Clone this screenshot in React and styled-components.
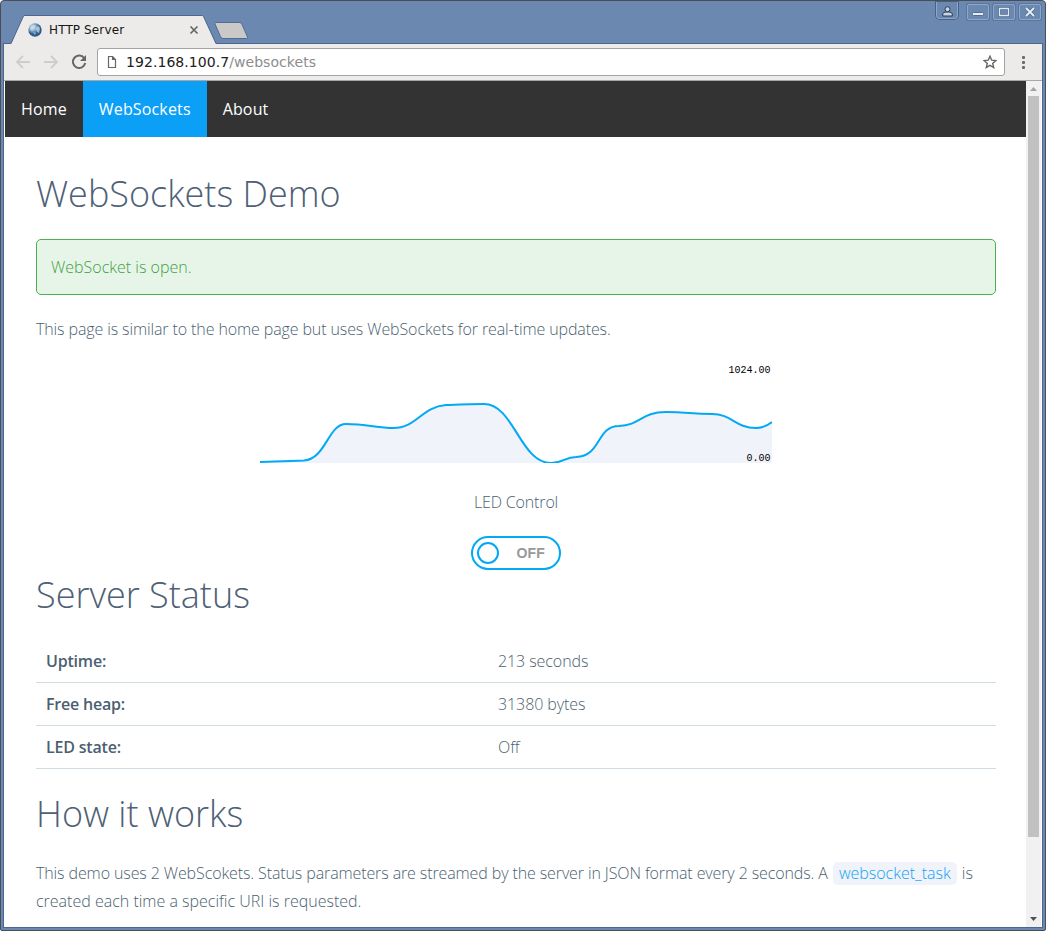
import React from "react";
import styled, { createGlobalStyle } from "styled-components";

const Global = createGlobalStyle`
  *, *::before, *::after { box-sizing: border-box; }
  html, body { margin: 0; padding: 0; background: #fff; }
  body { overflow: hidden; }
`;

const Window = styled.div`
  position: relative;
  display: flex;
  flex-direction: column;
  width: 1046px;
  height: 931px;
  overflow: hidden;
  padding: 1px 1px 1px 1px;
  background: #6b89b0;
  border: 1px solid #4b4e55;
  border-radius: 4px 4px 2px 2px;
`;

const TitleBar = styled.header`
  position: relative;
  display: flex;
  justify-content: space-between;
  flex: none;
  height: 41px;
`;

const TabStrip = styled.div`
  position: relative;
  width: 260px;
  height: 41px;
`;

const TabShape = styled.svg`
  position: absolute;
  left: 0;
  top: 0;
`;

const TabContent = styled.div`
  position: relative;
  display: flex;
  align-items: center;
  height: 27px;
  margin: 14px 0 0 26px;
  width: 171px;
`;

const TabTitle = styled.span`
  flex: 1;
  margin-left: 7px;
  font: 12px/20px "DejaVu Sans", sans-serif;
  letter-spacing: 0.12px;
  color: #161616;
`;

const WindowButtons = styled.div`
  display: flex;
  align-items: flex-start;
  margin-right: 3px;
`;

const WindowButton = styled.button`
  display: flex;
  align-items: center;
  justify-content: center;
  width: 22px;
  height: 16px;
  margin: 2px 0 0 4px;
  padding: 0;
  background: #6b89b0;
  border: 1px solid #8fa6c6;
  border-radius: 2px;
  box-shadow: 0 0 0 1px #58779e;
`;

const ProfileButton = styled(WindowButton)`
  height: 17px;
  margin: 0 5px 0 0;
  padding-top: 2px;
  border-top: 0;
  border-radius: 0 0 4px 4px;
  box-shadow: 0 0 0 1px #46618a;
`;

const Frame = styled.div`
  display: flex;
  flex-direction: column;
  flex: 1;
  min-height: 0;
  margin: 0 1px 1px 1px;
  border: 1px solid #4a678d;
`;

const Toolbar = styled.div`
  display: flex;
  align-items: center;
  flex: none;
  height: 37px;
  padding: 0 17px 0 11px;
  background: #edebe9;
  border-bottom: 1px solid #aaa8a6;
`;

const Tool = styled.span`
  display: flex;
  width: 16px;
  height: 16px;
  margin-right: 12px;
`;

const AddressBar = styled.div`
  display: flex;
  align-items: center;
  flex: 1;
  height: 28px;
  margin-left: -2px;
  padding: 0 7px 0 9px;
  background: #fff;
  border: 1px solid #a3a3a3;
  border-radius: 3px;
`;

const Url = styled.span`
  flex: 1;
  margin-left: 9px;
  font: 14px/20px "DejaVu Sans", sans-serif;
  letter-spacing: 0.06px;
  color: #8c8c8c;
`;

const Host = styled.span`
  color: #202020;
`;

const MenuDots = styled.div`
  display: flex;
  flex-direction: column;
  gap: 2px;
  margin-left: 17px;
`;

const Dot = styled.i`
  width: 3px;
  height: 3px;
  border-radius: 1px;
  background: #6b6b6b;
`;

const Viewport = styled.div`
  display: flex;
  flex: 1;
  min-height: 0;
  background: #fff;
  border-left: 1px solid #fff;
`;

const Page = styled.main`
  width: 1021px;
  height: 100%;
  overflow: hidden;
  font: 300 16px/28px "Open Sans", sans-serif;
  color: #4c5f71;
`;

const ScrollTrack = styled.div`
  display: flex;
  flex-direction: column;
  align-items: center;
  justify-content: space-between;
  width: 15px;
  background: #f1f1f1;
`;

const ScrollThumb = styled.div`
  width: 11px;
  height: 741px;
  margin-bottom: auto;
  background: #c1c1c1;
`;

const ScrollArrow = styled.svg`
  flex: none;
  display: block;
`;

const Nav = styled.nav`
  display: flex;
  height: 56px;
  background: #333;
`;

const NavLink = styled.a`
  padding: 0 16px;
  font-weight: 400;
  line-height: 56px;
  letter-spacing: 0.15px;
  color: #fff;
  background: ${(p) => (p.$active ? "#0c9ff6" : "transparent")};
`;

const Content = styled.div`
  width: 960px;
  margin-left: 31px;
  padding-top: 27px;
`;

const Heading = styled.h1`
  height: 60px;
  margin: ${(p) => p.$margin || "0"};
  font-size: 36px;
  font-weight: 300;
  line-height: 60px;
  letter-spacing: 0;
  color: #4e6076;
`;

const Alert = styled.div`
  height: 56px;
  margin-top: 15px;
  padding: 13px 14px;
  color: #3f9f45;
  background: #e7f5e8;
  border: 1px solid #4caf50;
  border-radius: 5px;
`;

const Paragraph = styled.p`
  margin: ${(p) => p.$margin || "0"};
`;

const Sentence = styled.span`
  letter-spacing: -0.11px;
`;

const Chart = styled.svg`
  display: block;
  margin: 20px auto 0;
`;

const LedControl = styled.div`
  display: flex;
  flex-direction: column;
  align-items: center;
  margin-top: 25px;
  letter-spacing: -0.15px;
`;

const Toggle = styled.button`
  display: flex;
  align-items: center;
  justify-content: space-between;
  width: 90px;
  height: 34px;
  margin-top: 20px;
  padding: 0 14px 0 4px;
  background: #fff;
  border: 2px solid #03a9f4;
  border-radius: 17px;
  font: bold 14px/20px "Liberation Sans", sans-serif;
  letter-spacing: 0.2px;
  color: #999;
`;

const Knob = styled.span`
  width: 22px;
  height: 22px;
  border: 2px solid #03a9f4;
  border-radius: 50%;
`;

const StatusTable = styled.dl`
  margin: 15px 0 0;
`;

const StatusRow = styled.div`
  display: grid;
  grid-template-columns: 452px 1fr;
  height: 43px;
  padding: 7px 10px;
  border-bottom: 1px solid #cfdde3;
`;

const Label = styled.dt`
  font-weight: 600;
  letter-spacing: -0.2px;
`;

const Value = styled.dd`
  margin: 0;
  letter-spacing: -0.08px;
`;

const Code = styled.code`
  margin: 0 1px;
  padding: 0 6px 1px;
  font: inherit;
  color: #12a2f5;
  background: #f0f3f9;
  border-radius: 5px;
`;

const status = [
  ["Uptime:", "213 seconds"],
  ["Free heap:", "31380 bytes"],
  ["LED state:", "Off"],
];

const curve =
  "M0 99 C22 98 30 98 44 97.5 C66 96 68 61 86 61 C106 61 118 65 133 65 C157 65 161 44 186 42 C200 41.5 213 41 224 41 C254 41 260 100 291 100 C303 100 305 94 316 94 C342 93 336 63 359 63 C381 62 381 49 406 49 C426 49 432 51 452 51 C472 51 475 65 496 65 C502 65 507 63 512 59";

const Globe = () => (
  <svg width="14" height="14" viewBox="0 0 14 14">
    <defs>
      <radialGradient id="globe" cx="35%" cy="30%">
        <stop offset="0" stopColor="#d7e7f1" />
        <stop offset="0.5" stopColor="#8db0cc" />
        <stop offset="1" stopColor="#2f5c8c" />
      </radialGradient>
    </defs>
    <circle cx="7" cy="7" r="6.7" fill="url(#globe)" />
    <path d="M3 3l3-1 1 2-2 2-1 2-2-2zM8 5l3-2 1 3-1 4-2-1zM5 9l3 1-1 2z" fill="#c9deea" opacity=".7" />
  </svg>
);

export default function App() {
  return (
    <>
      <Global />
      <Window>
        <TitleBar>
          <TabStrip>
            <TabShape width="260" height="42">
              <path d="M9 42L21.5 14Q22 13.5 23 13.5H200Q201 13.5 201.5 14.5L214 42Z" fill="#edebe9" />
              <path d="M9 41.5L21.5 14Q22 13.5 23 13.5H200Q201 13.5 201.5 14.5L214 41.5" fill="none" stroke="#4a678d" />
              <path d="M213.5 20.5H238Q239 20.5 240 22.5L245.5 35Q246 36.5 244.5 36.5H221Q219.5 36.5 218.5 34.5L213 22Q212.5 20.5 213.5 20.5Z" fill="#cbc9c7" stroke="#4f6c91" />
            </TabShape>
            <TabContent>
              <Globe />
              <TabTitle>HTTP Server</TabTitle>
              <svg width="10" height="10">
                <path d="M1.5 1.5l7 7M8.5 1.5l-7 7" stroke="#666" strokeWidth="1.7" />
              </svg>
            </TabContent>
          </TabStrip>
          <WindowButtons>
            <ProfileButton aria-label="Profile">
              <svg width="11" height="11">
                <path d="M.7 10V8Q1 6 4 6H7Q10 6 10.3 8V10Z" fill="#c9d5e4" stroke="#273b54" />
                <circle cx="5.5" cy="3.2" r="2.5" fill="#c9d5e4" stroke="#273b54" />
              </svg>
            </ProfileButton>
            <WindowButton aria-label="Minimize">
              <svg width="12" height="10">
                <rect x=".5" y="5.5" width="11" height="3" rx="1" fill="#e9eef5" stroke="#4f6e95" />
              </svg>
            </WindowButton>
            <WindowButton aria-label="Maximize">
              <svg width="12" height="10">
                <path d="M1.5 1.5h9v7h-9z" fill="none" stroke="#4f6e95" strokeWidth="3" />
                <path d="M1.5 1.5h9v7h-9z" fill="none" stroke="#dfe7f0" strokeWidth="1.3" />
              </svg>
            </WindowButton>
            <WindowButton aria-label="Close">
              <svg width="10" height="10">
                <path d="M1 1l8 8M9 1L1 9" stroke="#4f6e95" strokeWidth="3.5" />
                <path d="M1 1l8 8M9 1L1 9" stroke="#e9eef5" strokeWidth="1.8" />
              </svg>
            </WindowButton>
          </WindowButtons>
        </TitleBar>
        <Frame>
          <Toolbar>
            <Tool>
              <svg width="16" height="16" fill="none" stroke="#cfcdcb" strokeWidth="1.8">
                <path d="M15 8H2M8 2L2 8l6 6" />
              </svg>
            </Tool>
            <Tool>
              <svg width="16" height="16" fill="none" stroke="#cfcdcb" strokeWidth="1.8">
                <path d="M1 8H14M8 2l6 6-6 6" />
              </svg>
            </Tool>
            <Tool>
              <svg width="16" height="16" fill="none">
                <path d="M13.2 4.2A6.2 6.2 0 1 0 14.2 9" stroke="#666" strokeWidth="2" />
                <path d="M15 1V7H9Z" fill="#666" />
              </svg>
            </Tool>
            <AddressBar>
              <svg width="10" height="12" fill="none" stroke="#666">
                <path d="M1.5.5h4l3 3v8h-7zM5.5.5v3h3" strokeWidth="1.2" />
              </svg>
              <Url><Host>192.168.100.7</Host>/websockets</Url>
              <svg width="14" height="14" viewBox="0 0 14 14">
                <path d="M7 1.2l1.7 4 4.2.4-3.2 2.8 1 4.1L7 10.3l-3.7 2.2 1-4.1L1.1 5.6l4.2-.4z" fill="none" stroke="#666" strokeWidth="1.4" />
              </svg>
            </AddressBar>
            <MenuDots><Dot /><Dot /><Dot /></MenuDots>
          </Toolbar>
          <Viewport>
            <Page>
              <Nav>
                <NavLink>Home</NavLink>
                <NavLink $active>WebSockets</NavLink>
                <NavLink>About</NavLink>
              </Nav>
              <Content>
                <Heading>WebSockets Demo</Heading>
                <Alert>WebSocket is open.</Alert>
                <Paragraph $margin="20px 0 0">
                  <Sentence>This page is similar to the home page but uses WebSockets for real-time updates.</Sentence>
                </Paragraph>
                <Chart width="512" height="100">
                  <path d={`${curve} V100 H0 Z`} fill="#f0f3f9" />
                  <path d={curve} fill="none" stroke="#03a9f4" strokeWidth="2" />
                  <g fontFamily="'Liberation Mono', monospace" fontSize="10" fontWeight="400" fill="#000" textAnchor="end">
                    <text x="510.5" y="10">1024.00</text>
                    <text x="510.5" y="98">0.00</text>
                  </g>
                </Chart>
                <LedControl>
                  <span>LED Control</span>
                  <Toggle><Knob />OFF</Toggle>
                </LedControl>
                <Heading as="h2" $margin="-5px 0 0">Server Status</Heading>
                <StatusTable>
                  {status.map(([label, value]) => (
                    <StatusRow key={label}>
                      <Label>{label}</Label>
                      <Value>{value}</Value>
                    </StatusRow>
                  ))}
                </StatusTable>
                <Heading as="h2" $margin="15px 0 0">How it works</Heading>
                <Paragraph $margin="15px 0 0">
                  <Sentence>
                    This demo uses 2 WebScokets. Status parameters are streamed by the server in JSON format every 2 seconds. A{" "}
                  </Sentence>
                  <Code>websocket_task</Code> is created each time a specific URI is requested.
                </Paragraph>
              </Content>
            </Page>
            <ScrollTrack>
              <ScrollArrow width="15" height="15"><path d="M4 10L7.5 6L11 10Z" fill="#a3a3a3" /></ScrollArrow>
              <ScrollThumb />
              <ScrollArrow width="15" height="15"><path d="M4 5L7.5 9L11 5Z" fill="#505050" /></ScrollArrow>
            </ScrollTrack>
          </Viewport>
        </Frame>
      </Window>
    </>
  );
}
